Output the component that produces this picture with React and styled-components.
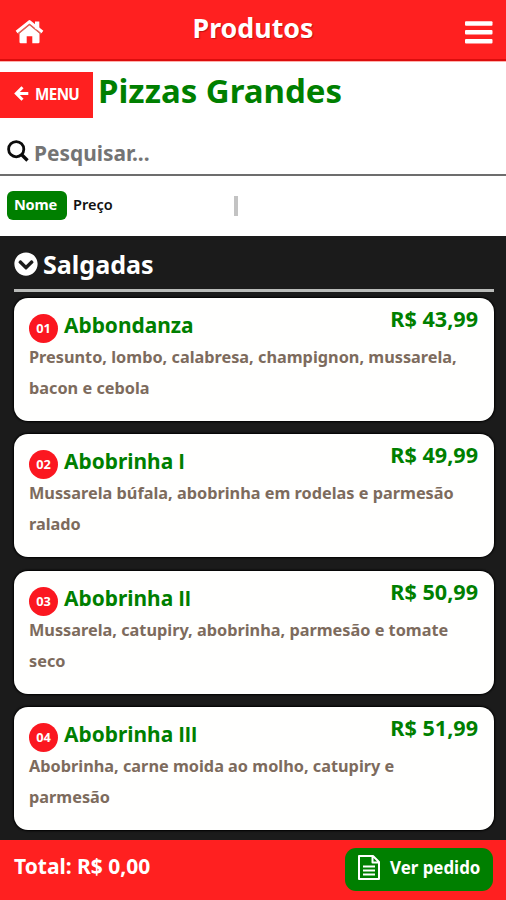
import React from "react";
import styled, { createGlobalStyle } from "styled-components";
import { FaChevronCircleDown } from "react-icons/fa";

const GlobalStyle = createGlobalStyle`
  *, *::before, *::after { box-sizing: border-box; }
  body { margin: 0; background: #fff; }
`;

const Page = styled.div`
  display: flex;
  flex-direction: column;
  width: 506px;
  height: 900px;
  overflow: hidden;
  background: #fff;
  font-family: "Noto Sans", "Open Sans", sans-serif;
  font-weight: 700;
`;

const Header = styled.header`
  display: grid;
  grid-template-columns: 60px 1fr 60px;
  height: 62px;
  flex: none;
  background: #ff2020;
  border-bottom: 1px solid #ffb0ac;
  box-shadow: inset 0 -2px 0 #dc0d0d;
  color: #fff;
`;

const HomeButton = styled.div`
  padding: 20px 0 0 15px;
  svg { display: block; }
`;

const MenuToggle = styled.div`
  padding: 21px 0 0 19px;
  svg { display: block; }
`;

const Title = styled.h1`
  margin: 0;
  padding-top: 8px;
  font-size: 26.8px;
  line-height: 39px;
  text-align: center;
  text-shadow: 1px 1px 1px rgba(120, 0, 0, 0.45);
`;

const CategoryBar = styled.div`
  display: flex;
  height: 73px;
  flex: none;
  padding-top: 10px;
`;

const BackButton = styled.div`
  display: flex;
  align-items: center;
  gap: 6px;
  width: 93px;
  height: 46px;
  padding: 0 0 3px 14px;
  background: #ff2020;
  color: #fff;
  font-size: 15.2px;
  letter-spacing: -0.6px;
  svg { flex: none; }
`;

const CategoryName = styled.h2`
  margin: -1px 0 0 5px;
  color: #007f00;
  font-size: 33px;
  line-height: 40px;
`;

const SearchBar = styled.div`
  display: flex;
  gap: 5px;
  height: 41px;
  flex: none;
  padding-left: 7px;
  border-bottom: 2px solid #6d6d6d;
  color: #747474;
  font-size: 20.9px;
  line-height: 36px;
  svg { flex: none; margin-top: 5px; }
`;

const SortBar = styled.div`
  display: flex;
  height: 60px;
  flex: none;
  padding: 15px 0 0 7px;
`;

const SortOption = styled.div`
  height: 29px;
  padding: 0 0 0 ${(p) => (p.$active ? "7px" : "6px")};
  border-radius: 6px;
  background: ${(p) => (p.$active ? "#007f00" : "transparent")};
  color: ${(p) => (p.$active ? "#fff" : "#111")};
  font-size: ${(p) => (p.$active ? "14.6px" : "14.5px")};
  letter-spacing: ${(p) => (p.$active ? "-0.25px" : "0")};
  font-weight: ${(p) => (p.$active ? 700 : 600)};
  line-height: 26px;
  width: ${(p) => (p.$active ? "60px" : "167px")};
`;

const Divider = styled.div`
  width: 4px;
  height: 20px;
  margin-top: 5px;
  background: #c3c3c3;
`;

const Products = styled.main`
  flex: 1;
  min-height: 0;
  padding: 0 12px 0 14px;
  background: #1b1b1b;
`;

const SectionHeading = styled.div`
  display: flex;
  gap: 5px;
  height: 56px;
  padding-top: 10px;
  border-bottom: 3px solid #b9bbb9;
  color: #fff;
  font-size: 25.1px;
  line-height: 37px;
  svg { flex: none; width: 24px; height: 24px; margin-top: 6px; }
`;

const CardList = styled.div`
  display: grid;
  gap: 13.6px;
  padding-top: 6px;
`;

const Card = styled.article`
  height: 122.8px;
  padding: 0 15px;
  border-radius: 14px;
  background: #fffffe;
  box-shadow: 0 0 2px 1px #000;
`;

const CardTop = styled.div`
  display: flex;
  height: 44px;
`;

const Badge = styled.span`
  width: 29px;
  height: 29px;
  flex: none;
  margin: 16px 6px 0 0;
  border-radius: 50%;
  background: #fb1720;
  color: #fff;
  font-size: 12.8px;
  line-height: 29px;
  text-align: center;
`;

const Name = styled.h3`
  flex: 1;
  margin: 0;
  color: #007f00;
  font-size: 20.9px;
  line-height: 55.500px;
`;

const Numeral = styled.span`
  font-family: Inter, "Liberation Sans", sans-serif;
  font-size: 20.500px;
  line-height: 1;
  letter-spacing: 0.6px;
`;

const Price = styled.span`
  margin-right: 1px;
  color: #007f00;
  font-size: 21.6px;
  line-height: 42px;
`;

const Description = styled.p`
  margin: 0;
  color: #7d6b5d;
  font-size: 16.3px;
  line-height: 31px;
`;

const DescriptionLine = styled.span`
  display: block;
  white-space: nowrap;
`;

const Footer = styled.footer`
  display: flex;
  justify-content: space-between;
  height: 60px;
  flex: none;
  padding: 8px 13px 0 14px;
  background: #ff2020;
  color: #fff;
`;

const Total = styled.span`
  font-size: 21px;
  line-height: 36px;
`;

const OrderButton = styled.div`
  display: flex;
  gap: 10px;
  width: 148px;
  height: 43px;
  padding-left: 13px;
  border-radius: 11px;
  background: #007f00;
  font-size: 16.9px;
  line-height: 39px;
  white-space: nowrap;
  svg { flex: none; margin-top: 7px; }
`;

const products = [
  { number: "01", name: "Abbondanza", price: "R$ 43,99", lines: ["Presunto, lombo, calabresa, champignon, mussarela,", "bacon e cebola"] },
  { number: "02", name: "Abobrinha", numeral: "I", price: "R$ 49,99", lines: ["Mussarela búfala, abobrinha em rodelas e parmesão", "ralado"] },
  { number: "03", name: "Abobrinha", numeral: "II", price: "R$ 50,99", lines: ["Mussarela, catupiry, abobrinha, parmesão e tomate", "seco"] },
  { number: "04", name: "Abobrinha", numeral: "III", price: "R$ 51,99", lines: ["Abobrinha, carne moida ao molho, catupiry e", "parmesão"] },
];

export default function App() {
  return (
    <Page>
      <GlobalStyle />
      <Header>
        <HomeButton>
          <svg width="29" height="24" viewBox="0 0 29 24">
            <path d="M4.5 13.2 14.5 5l10 8.2V22q0 1.2-1.2 1.2h-6v-7h-5.6v7h-6Q4.5 23.2 4.5 22z" fill="#fff" />
            <path d="M20 1.500h4.300v8H20z" fill="#fff" />
            <path d="m3 14 11.500-9.500L26 14" fill="none" stroke="#d96a5c" strokeWidth="1.200" />
            <path d="m1.600 12 12.900-10.400 12.900 10.400" fill="none" stroke="#fff" strokeWidth="3" strokeLinejoin="round" />
          </svg>
        </HomeButton>
        <Title>Produtos</Title>
        <MenuToggle>
          <svg width="28" height="23" viewBox="0 0 28 23" fill="#fff">
            <rect y="0.2" width="27.5" height="4.6" rx="1" />
            <rect y="9" width="27.5" height="4.6" rx="1" />
            <rect y="17.9" width="27.5" height="4.6" rx="1" />
          </svg>
        </MenuToggle>
      </Header>
      <CategoryBar>
        <BackButton>
          <svg width="15" height="15" viewBox="0 0 15 15" fill="none" stroke="#fff" strokeWidth="3">
            <path d="M8.5 1.3 2.3 7.5l6.2 6.2M3 7.5H14.3" />
          </svg>
          MENU
        </BackButton>
        <CategoryName>Pizzas Grandes</CategoryName>
      </CategoryBar>
      <SearchBar>
        <svg width="22" height="22" viewBox="0 0 22 22" fill="none" stroke="#0b0b0b" strokeWidth="2.8">
          <circle cx="9.2" cy="9.2" r="7.6" />
          <path d="m14.5 14.5 6 6" strokeWidth="3.4" />
        </svg>
        Pesquisar...
      </SearchBar>
      <SortBar>
        <SortOption $active>Nome</SortOption>
        <SortOption>Preço</SortOption>
        <Divider />
      </SortBar>
      <Products>
        <SectionHeading><FaChevronCircleDown />Salgadas</SectionHeading>
        <CardList>
          {products.map(({ number, name, numeral, price, lines }) => (
            <Card key={number}>
              <CardTop>
                <Badge>{number}</Badge>
                <Name>{name}{numeral && <> <Numeral>{numeral}</Numeral></>}</Name>
                <Price>{price}</Price>
              </CardTop>
              <Description>
                {lines.map((line) => <DescriptionLine key={line}>{line}</DescriptionLine>)}
              </Description>
            </Card>
          ))}
        </CardList>
      </Products>
      <Footer>
        <Total>Total: R$ 0,00</Total>
        <OrderButton>
          <svg width="22" height="25" viewBox="0 0 22 25" fill="none" stroke="#fff" strokeWidth="2">
            <path d="M1 1h14l6 6v17H1zM14.5 1v6.5h6.500" strokeLinejoin="round" />
            <path d="M5 11.5h12M5 15.5h12M5 19.5h12" />
          </svg>
          Ver pedido
        </OrderButton>
      </Footer>
    </Page>
  );
}
